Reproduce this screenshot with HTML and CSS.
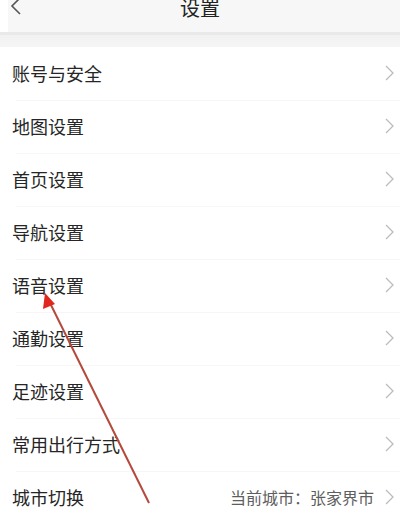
FILE: index.html
```html
<!DOCTYPE html>
<html lang="zh">
<head>
<meta charset="utf-8">
<link rel="stylesheet" href="styles.css">
</head>
<body>
<div class="page">
  <header class="bar">
    <svg class="back" width="12" height="20" viewBox="0 0 12 20"><path d="M10 1 L2 9 L10 17" fill="none" stroke="#555" stroke-width="1.6"/></svg>
    <h1 class="title">设置</h1>
  </header>
  <div class="gap"></div>
  <ul class="list">
    <li class="row"><span class="label">账号与安全</span><svg class="chev" width="9" height="16" viewBox="0 0 9 16"><path d="M1 1 L8 8 L1 15" fill="none" stroke="#bcbcbc" stroke-width="1.3"/></svg></li>
    <li class="row"><span class="label">地图设置</span><svg class="chev" width="9" height="16" viewBox="0 0 9 16"><path d="M1 1 L8 8 L1 15" fill="none" stroke="#bcbcbc" stroke-width="1.3"/></svg></li>
    <li class="row"><span class="label">首页设置</span><svg class="chev" width="9" height="16" viewBox="0 0 9 16"><path d="M1 1 L8 8 L1 15" fill="none" stroke="#bcbcbc" stroke-width="1.3"/></svg></li>
    <li class="row"><span class="label">导航设置</span><svg class="chev" width="9" height="16" viewBox="0 0 9 16"><path d="M1 1 L8 8 L1 15" fill="none" stroke="#bcbcbc" stroke-width="1.3"/></svg></li>
    <li class="row"><span class="label">语音设置</span><svg class="chev" width="9" height="16" viewBox="0 0 9 16"><path d="M1 1 L8 8 L1 15" fill="none" stroke="#bcbcbc" stroke-width="1.3"/></svg></li>
    <li class="row"><span class="label">通勤设置</span><svg class="chev" width="9" height="16" viewBox="0 0 9 16"><path d="M1 1 L8 8 L1 15" fill="none" stroke="#bcbcbc" stroke-width="1.3"/></svg></li>
    <li class="row"><span class="label">足迹设置</span><svg class="chev" width="9" height="16" viewBox="0 0 9 16"><path d="M1 1 L8 8 L1 15" fill="none" stroke="#bcbcbc" stroke-width="1.3"/></svg></li>
    <li class="row"><span class="label">常用出行方式</span><svg class="chev" width="9" height="16" viewBox="0 0 9 16"><path d="M1 1 L8 8 L1 15" fill="none" stroke="#bcbcbc" stroke-width="1.3"/></svg></li>
    <li class="row"><span class="label">城市切换</span><span class="value">当前城市：张家界市</span><svg class="chev" width="9" height="16" viewBox="0 0 9 16"><path d="M1 1 L8 8 L1 15" fill="none" stroke="#bcbcbc" stroke-width="1.3"/></svg></li>
  </ul>
  <svg class="pointer" width="400" height="524" viewBox="0 0 400 524">
    <line x1="149" y1="503" x2="50" y2="303" stroke="#b4493c" stroke-width="2"/>
    <polygon points="45,293 43,309 55,304" fill="#e0281e"/>
  </svg>
</div>
</body>
</html>
```
FILE: styles.css
```css
html, body {
  margin: 0;
  padding: 0;
  background: #fff;
}
body {
  font-family: "Noto Sans CJK SC", "Noto Sans", sans-serif;
  color: #333;
}
.page {
  position: relative;
  width: 400px;
  height: 524px;
  overflow: hidden;
}
.bar {
  height: 32px;
  margin-left: 8px;
  background: #f7f7f7;
  display: flex;
  align-items: flex-start;
  justify-content: center;
  position: relative;
}
.back {
  position: absolute;
  left: 2px;
  top: -3px;
}
.title {
  margin: -5px 0 0 -8px;
  font-size: 20px;
  font-weight: 400;
  color: #222;
  line-height: 26px;
}
.gap {
  height: 15px;
  border-top: 3px solid #e9e9e9;
  background: linear-gradient(#f1f1f1, #f6f6f6);
  box-sizing: border-box;
}
.list {
  list-style: none;
  margin: 0;
  padding: 0;
}
.row {
  height: 53px;
  display: flex;
  align-items: center;
  padding-left: 12px;
  padding-right: 6px;
  padding-bottom: 2px;
  box-sizing: border-box;
  position: relative;
}
.row + .row::before {
  content: "";
  position: absolute;
  left: 16px;
  right: 0;
  top: 0;
  height: 1px;
  background: #f6f6f6;
}
.label {
  flex: 1;
  font-size: 18px;
  color: #262626;
}
.value {
  font-size: 16px;
  color: #5e5e5e;
  margin-right: 11px;
}
.chev {
  display: block;
}
.pointer {
  position: absolute;
  left: 0;
  top: 0;
  pointer-events: none;
}
```
